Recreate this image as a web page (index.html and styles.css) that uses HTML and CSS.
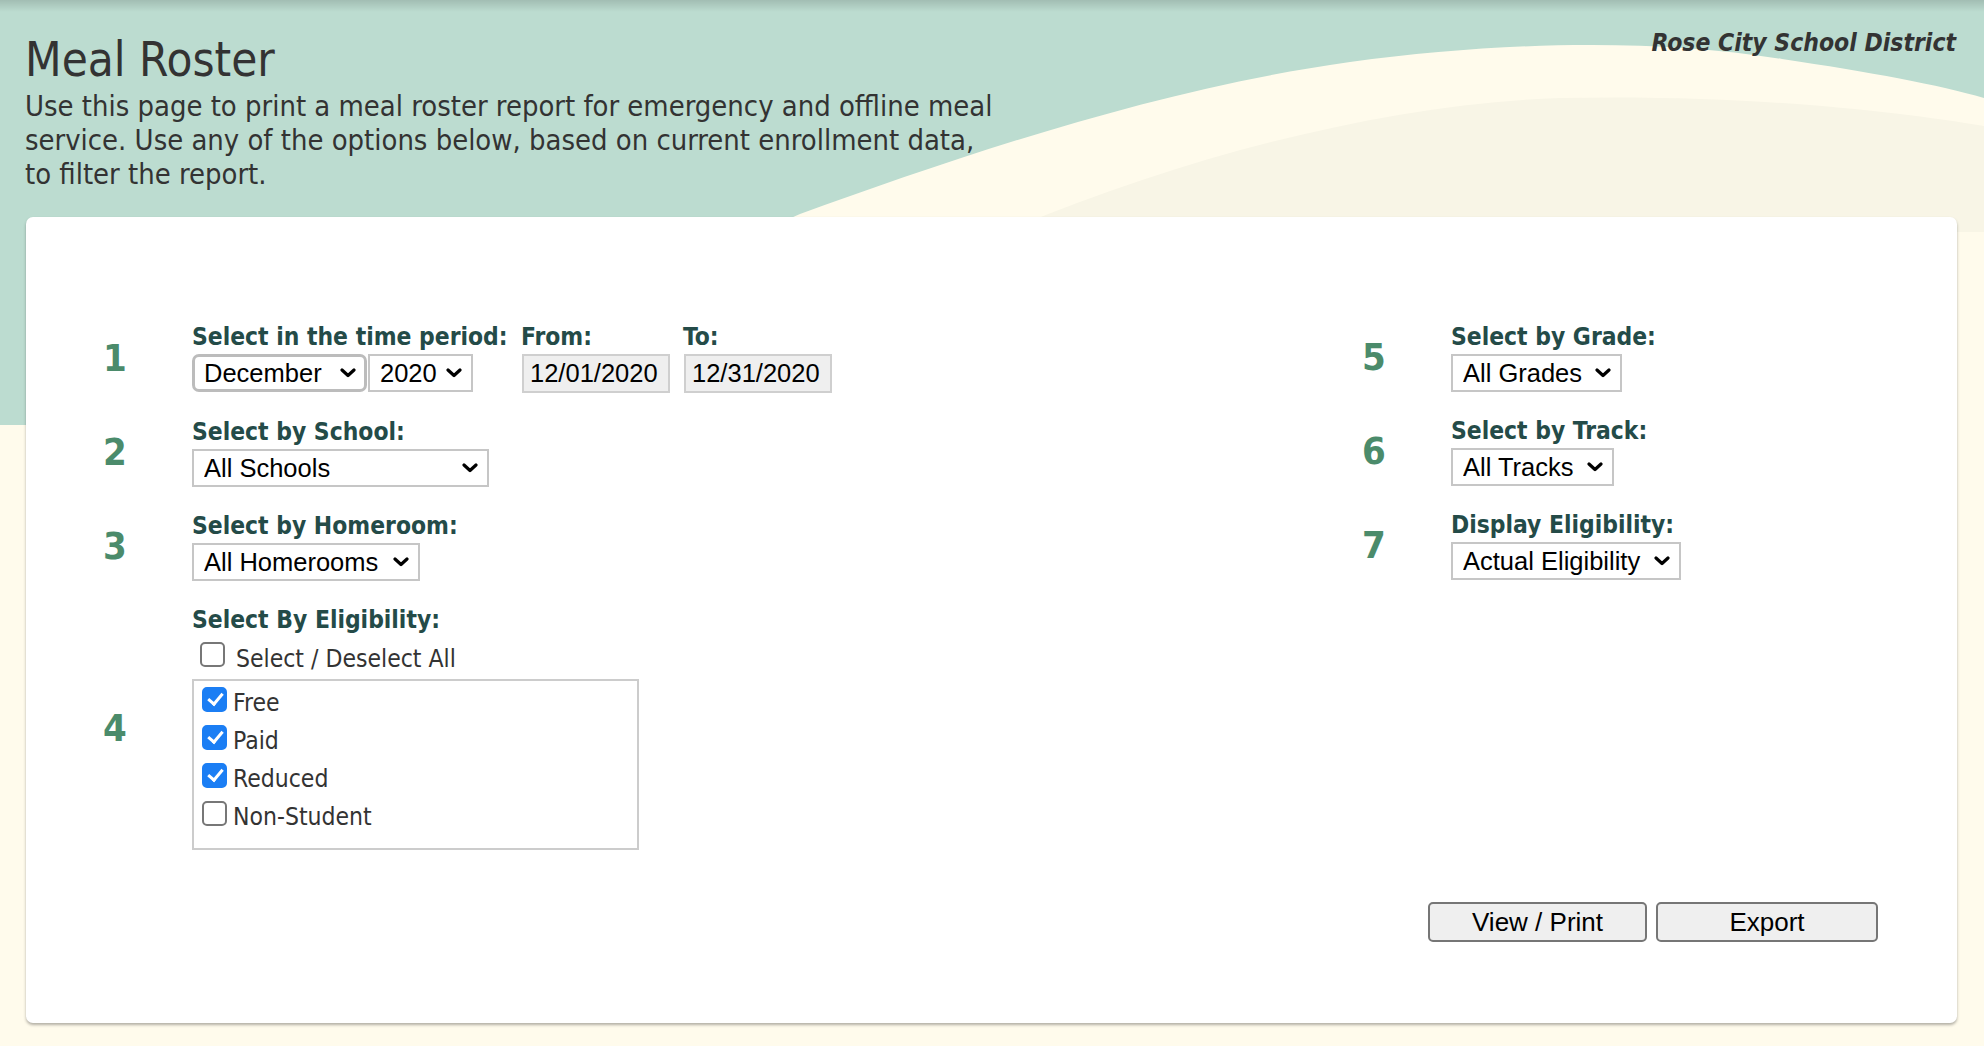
FILE: index.html
```html
<!DOCTYPE html>
<html lang="en">
<head>
<meta charset="utf-8">
<title>Meal Roster</title>
<link rel="stylesheet" href="styles.css">
</head>
<body>
<svg class="backdrop" width="1984" height="1046" viewBox="0 0 1984 1046" aria-hidden="true">
  <defs>
    <linearGradient id="topshade" x1="0" y1="0" x2="0" y2="1">
      <stop offset="0" stop-color="#000" stop-opacity="0.14"/>
      <stop offset="1" stop-color="#000" stop-opacity="0"/>
    </linearGradient>
  </defs>
  <rect x="0" y="0" width="1984" height="1046" fill="#bcdcd0"/>
  <path d="M0,425 L300,425 C520,420 650,280 800,214 C950,160 1150,90 1350,62 C1500,42 1650,38 1782,59 C1870,72 1940,85 1984,98 L1984,1046 L0,1046 Z" fill="#fffbec"/>
  <path d="M900,280 C1100,180 1350,105 1560,98 C1750,94 1900,112 1984,126 L1984,232 L900,232 Z" fill="#f8f5e6"/>
  <rect x="0" y="0" width="1984" height="12" fill="url(#topshade)"/>
</svg>

<div class="page">
  <header class="header">
    <div class="intro">
      <h1 class="title">Meal Roster</h1>
      <p class="lead">Use this page to print a meal roster report for emergency and offline meal<br>service. Use any of the options below, based on current enrollment data,<br>to filter the report.</p>
    </div>
    <div class="district">Rose City School District</div>
  </header>

  <main class="card">
    <div class="columns">
      <div class="column">
        <div class="field">
          <div class="num">1</div>
          <div class="period">
            <div class="group group-main">
              <label class="label">Select in the time period:</label>
              <div class="controls">
                <span class="sel"><select class="select select-focus w-month"><option>December</option></select><svg class="chev" viewBox="0 0 16 10"><path d="M2 2l6 5.5L14 2"/></svg></span>
                <span class="sel"><select class="select w-year"><option>2020</option></select><svg class="chev" viewBox="0 0 16 10"><path d="M2 2l6 5.5L14 2"/></svg></span>
              </div>
            </div>
            <div class="group">
              <label class="label">From:</label>
              <input class="date" type="text" value="12/01/2020" readonly>
            </div>
            <div class="group">
              <label class="label">To:</label>
              <input class="date" type="text" value="12/31/2020" readonly>
            </div>
          </div>
        </div>

        <div class="field">
          <div class="num">2</div>
          <div class="body">
            <label class="label">Select by School:</label>
            <span class="sel"><select class="select w-school"><option>All Schools</option></select><svg class="chev" viewBox="0 0 16 10"><path d="M2 2l6 5.5L14 2"/></svg></span>
          </div>
        </div>

        <div class="field">
          <div class="num">3</div>
          <div class="body">
            <label class="label">Select by Homeroom:</label>
            <span class="sel"><select class="select w-homeroom"><option>All Homerooms</option></select><svg class="chev" viewBox="0 0 16 10"><path d="M2 2l6 5.5L14 2"/></svg></span>
          </div>
        </div>

        <div class="field">
          <div class="num">4</div>
          <div class="body">
            <label class="label">Select By Eligibility:</label>
            <label class="check-all"><input type="checkbox" class="cb"><span>Select / Deselect All</span></label>
            <div class="elig-box">
              <label class="check"><input type="checkbox" class="cb" checked><span>Free</span></label>
              <label class="check"><input type="checkbox" class="cb" checked><span>Paid</span></label>
              <label class="check"><input type="checkbox" class="cb" checked><span>Reduced</span></label>
              <label class="check"><input type="checkbox" class="cb"><span>Non-Student</span></label>
            </div>
          </div>
        </div>
      </div>

      <div class="column">
        <div class="field">
          <div class="num">5</div>
          <div class="body">
            <label class="label">Select by Grade:</label>
            <span class="sel"><select class="select w-grade"><option>All Grades</option></select><svg class="chev" viewBox="0 0 16 10"><path d="M2 2l6 5.5L14 2"/></svg></span>
          </div>
        </div>
        <div class="field">
          <div class="num">6</div>
          <div class="body">
            <label class="label">Select by Track:</label>
            <span class="sel"><select class="select w-track"><option>All Tracks</option></select><svg class="chev" viewBox="0 0 16 10"><path d="M2 2l6 5.5L14 2"/></svg></span>
          </div>
        </div>
        <div class="field">
          <div class="num">7</div>
          <div class="body">
            <label class="label">Display Eligibility:</label>
            <span class="sel"><select class="select w-elig"><option>Actual Eligibility</option></select><svg class="chev" viewBox="0 0 16 10"><path d="M2 2l6 5.5L14 2"/></svg></span>
          </div>
        </div>
      </div>
    </div>

    <div class="actions">
      <button class="btn btn-view" type="button">View / Print</button>
      <button class="btn btn-export" type="button">Export</button>
    </div>
  </main>
</div>
</body>
</html>
```

FILE: styles.css
```css
html, body {
  margin: 0;
  padding: 0;
}

body {
  width: 1984px;
  height: 1046px;
  overflow: hidden;
  position: relative;
  background: #fffbec;
  font-family: "DejaVu Sans Condensed", "DejaVu Sans", sans-serif;
  font-stretch: semi-condensed;
  color: #333;
}

.backdrop {
  position: absolute;
  left: 0;
  top: 0;
  z-index: 0;
}

.page {
  position: relative;
  z-index: 1;
}

.header {
  display: flex;
  justify-content: space-between;
  align-items: flex-start;
  padding: 30px 28px 0 25px;
}

.title {
  margin: 0;
  font-size: 47.2px;
  font-weight: normal;
  line-height: 59px;
  color: #333;
}

.lead {
  margin: 0;
  font-size: 28.9px;
  line-height: 34px;
  color: #333;
}

.district {
  margin-top: -2px;
  font-size: 24.5px;
  line-height: 30px;
  font-weight: bold;
  font-style: italic;
  color: #333;
}

.card {
  margin: 26px 27px 0 26px;
  background: #fff;
  border-radius: 7px;
  box-shadow: 0 2px 3px rgba(0, 0, 0, 0.3);
  padding: 105px 79px 81px 24px;
  display: flex;
  flex-direction: column;
}

.columns {
  display: grid;
  grid-template-columns: 1259px 1fr;
}

.column {
  display: flex;
  flex-direction: column;
  gap: 24px;
}

.field {
  display: flex;
  align-items: center;
}

.num {
  width: 130px;
  margin-right: 12px;
  flex: none;
  text-align: center;
  font-size: 38px;
  font-weight: bold;
  color: #4b8b6b;
}

.body {
  display: flex;
  flex-direction: column;
  align-items: flex-start;
}

.label {
  display: block;
  font-size: 24.4px;
  line-height: 30px;
  font-weight: bold;
  color: #244b48;
  margin-bottom: 2px;
  white-space: nowrap;
}

.period {
  display: flex;
  gap: 13px;
}

.group {
  display: flex;
  flex-direction: column;
}

.group-main {
  width: 316px;
}

.controls {
  display: flex;
  gap: 1px;
}

.sel {
  position: relative;
  display: inline-block;
  height: 38px;
}

.select {
  appearance: none;
  -webkit-appearance: none;
  box-sizing: border-box;
  height: 38px;
  margin: 0;
  padding: 0 30px 0 10px;
  border: 2px solid #c6c6c6;
  border-radius: 0;
  background: #fff;
  font-family: "Liberation Sans", Arial, sans-serif;
  font-size: 25.5px;
  color: #000;
}

.select-focus {
  border: 3px solid #bcbcbc;
  border-radius: 7px;
  padding-left: 9px;
}

.chev {
  position: absolute;
  right: 11px;
  top: 14px;
  width: 16px;
  height: 10px;
  pointer-events: none;
}

.chev path {
  fill: none;
  stroke: #000;
  stroke-width: 3.2;
  stroke-linecap: round;
  stroke-linejoin: round;
}

.w-month { width: 175px; }
.w-year { width: 105px; }
.w-school { width: 297px; }
.w-homeroom { width: 228px; }
.w-grade { width: 171px; }
.w-track { width: 163px; }
.w-elig { width: 230px; }

.date {
  box-sizing: border-box;
  width: 148px;
  height: 39px;
  margin: 0 0 0 1px;
  padding: 0 6px;
  border: 2px solid #cfcfcf;
  background: #efefef;
  font-family: "Liberation Sans", Arial, sans-serif;
  font-size: 25.5px;
  color: #000;
  outline: none;
}

.check-all,
.check {
  display: flex;
  align-items: flex-start;
  height: 30px;
  font-size: 24.5px;
  line-height: 30px;
  color: #333;
}

.check-all {
  margin-top: 6.5px;
  padding-left: 8px;
}

.check-all .cb {
  margin: -2px 11px 0 0;
}

.check .cb {
  margin: -1.5px 6px 0 0;
}

.cb {
  appearance: none;
  -webkit-appearance: none;
  box-sizing: border-box;
  width: 25px;
  height: 25px;
  flex: none;
  border: 2px solid #777;
  border-radius: 5px;
  background: #fff;
  position: relative;
}

.cb:checked {
  background: #1b7ef4;
  border-color: #1b7ef4;
}

.cb:checked::after {
  content: "";
  position: absolute;
  left: 6.5px;
  top: 1.5px;
  width: 6px;
  height: 12px;
  border-right: 3.5px solid #fff;
  border-bottom: 3.5px solid #fff;
  transform: rotate(40deg);
}

.elig-box {
  box-sizing: border-box;
  width: 447px;
  margin-top: 5px;
  padding: 7.5px 8px 16px;
  border: 2px solid #cccccc;
  display: flex;
  flex-direction: column;
  gap: 8px;
}

.actions {
  display: flex;
  justify-content: flex-end;
  gap: 9px;
  margin-top: 52px;
}

.btn {
  box-sizing: border-box;
  height: 40px;
  margin: 0;
  padding: 0;
  border: 2px solid #767676;
  border-radius: 5px;
  background: #efefef;
  font-family: "Liberation Sans", Arial, sans-serif;
  font-size: 26px;
  color: #000;
}

.btn-view { width: 219px; }
.btn-export { width: 222px; }
```
